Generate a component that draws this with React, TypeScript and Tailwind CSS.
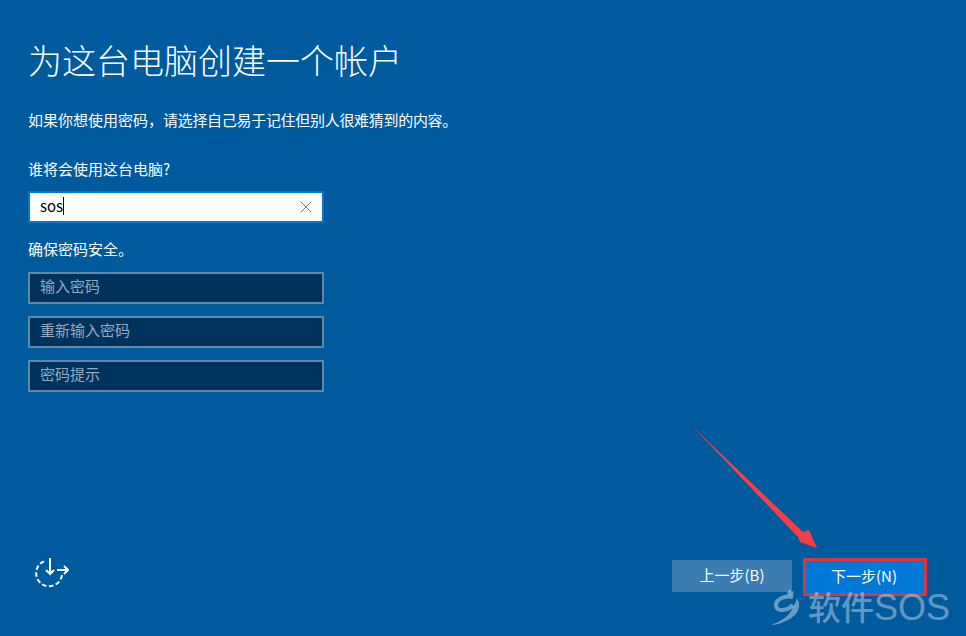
import React from 'react';
import { X } from 'lucide-react';

const cjk = "font-['Microsoft_YaHei','Noto_Sans_CJK_SC','Noto_Sans',sans-serif]";

const PasswordField = ({ hint }: { hint: string }) => (
  <div className="flex h-8 w-[296px] items-center border-2 border-[#5f87a8] bg-[#00335c] pb-1 pl-2.5 text-[15px] text-[#94abbf]">
    {hint}
  </div>
);

// little "ease of access" glyph bottom left
const AccessIcon = () => (
  <svg width="36" height="36" viewBox="0 0 36 36" fill="none" stroke="white" strokeWidth="2">
    <path d="M11 5.300A13 13 0 1 0 29 19" strokeDasharray="4.500 2.500" />
    <path d="M17 2v16M13 14l4 4 4-4" />
    <path d="M24 14h11M31 10l4 4-4 4" />
  </svg>
);

const App = () => {
  return (
    <div className={`relative flex h-[636px] w-[966px] flex-col overflow-hidden bg-[#005a9e] text-white ${cjk}`}>
      <div className="flex flex-1 flex-col pl-7 pt-10">
        <h1 className="text-[34px] leading-10 font-light">为这台电脑创建一个帐户</h1>
        <p className="mt-[30px] text-[15px] leading-5">
          如果你想使用密码，<span className="tracking-[-0.3px]">请选择自己易于记住但别人很难猜到的内容。</span>
        </p>
        <p className="mt-[29px] text-[15px] leading-5">谁将会使用这台电脑?</p>
        <div className="mt-3 flex h-8 w-[296px] items-center border-2 border-[#0078d7] bg-white pb-0.5 pl-2.5 pr-1.5 text-[15px] text-black">
          <span>sos</span>
          <span className="h-[18px] w-px bg-black" />
          <X size={20} strokeWidth={1} className="ml-auto mt-0.5 text-[#666666]" />
        </div>
        <p className="mt-4 text-[15px] leading-5">确保密码安全。</p>
        <div className="mt-[13px] flex flex-col gap-3">
          <PasswordField hint="输入密码" />
          <PasswordField hint="重新输入密码" />
          <PasswordField hint="密码提示" />
        </div>
      </div>

      <div className="flex items-start justify-between pb-10 pl-[33px] pr-[39px]">
        <div className="-mt-0.5">
          <AccessIcon />
        </div>
        <div className="flex items-start gap-[11px]">
          <button className="mt-0.5 h-8 w-[120px] bg-[#3b7cb1] pb-0.5 text-[15px]">上一步(B)</button>
          <button className="h-[38px] w-[124px] border-[3px] border-[#d9363e] bg-[#0078d7] pb-0.5 pr-0.5 text-[15px]">下一步(N)</button>
        </div>
      </div>

      {/* red annotation arrow */}
      <svg className="absolute left-[690px] top-[424px]" width="130" height="130" viewBox="0 0 130 130">
        <path d="M3 3 113 108 119 106 127 124 110 118 108 113Z" fill="#f43f46" />
      </svg>

      {/* watermark */}
      <div className="absolute left-[770px] top-[588px] flex items-center gap-1.5 text-white/40">
        <svg width="32" height="38" viewBox="0 0 32 38" fill="currentColor">
          <path d="M23 9C14 7 5 12 6 18 7 24 17 23 23 17" fill="none" stroke="currentColor" strokeWidth="4" />
          <path d="M27 10C32 18 28 27 18 32 12 35 6 37 1 37 9 34 17 30 21 23 24 18 26 14 27 10Z" />
          <path d="M17 5 20 1 21 4 24 3 23 7 18 7Z" />
        </svg>
        <span className="text-[33px] leading-9 font-medium">软件<span className="font-['Liberation_Sans'] text-[36px] font-normal">SOS</span></span>
      </div>
    </div>
  );
};

export default App;
